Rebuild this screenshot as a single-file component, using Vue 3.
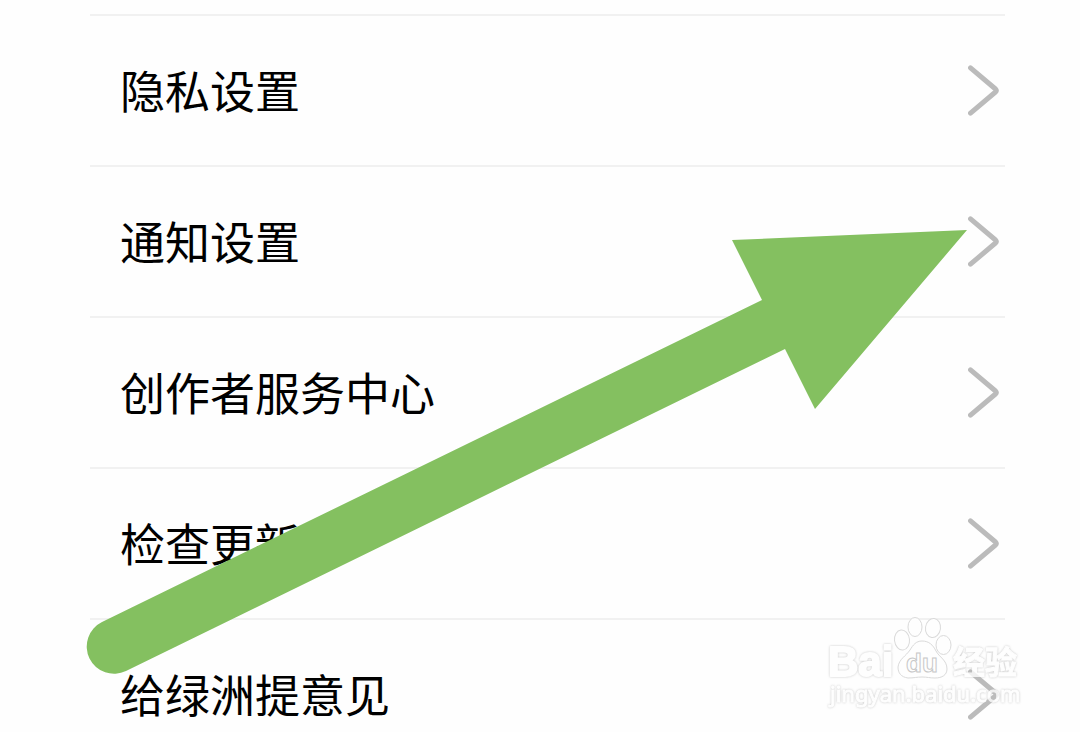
<script setup>
const items = ['隐私设置', '通知设置', '创作者服务中心', '检查更新', '给绿洲提意见']
</script>

<template>
  <main class="page">
    <ul class="list">
      <li v-for="item in items" :key="item" class="item">
        <button type="button" class="row">
          <span class="label">{{ item }}</span>
          <svg class="chevron" viewBox="0 0 32 52" aria-hidden="true">
            <path d="M2.5 2.800 L27.500 24 Q29 25.500 27.500 27 L2.500 48.200" />
          </svg>
        </button>
      </li>
    </ul>

    <svg class="arrow" viewBox="0 0 1080 732" aria-hidden="true">
      <path d="M102 622 L762 300 L732 240 L967 230 L815 409 L785 349 L126 671 A27 27 0 0 1 102 622 Z" />
    </svg>

    <svg class="watermark" viewBox="0 0 204 100" role="img" aria-label="Baidu 经验 jingyan.baidu.com">
      <g class="paw">
        <ellipse cx="77" cy="30" rx="7.500" ry="10" transform="rotate(-6 77 30)" />
        <ellipse cx="90" cy="17" rx="7" ry="9.500" />
        <ellipse cx="108" cy="18" rx="7.500" ry="9.500" transform="rotate(8 108 18)" />
        <ellipse cx="118.500" cy="35" rx="7.500" ry="9.500" />
        <path d="M97 31 C104 31 108 35 111 41 C114 47 122 50 122 59 C122 65 117 68 110 68 C105 68 102 67 97 67 C92 67 89 68 83 68 C76 67 73 63 73 57 C74 49 81 46 85 40 C88 35 91 31 97 31 Z" />
      </g>
      <text class="word brand" x="3" y="66">Bai</text>
      <text class="du" x="81" y="62">du</text>
      <text class="word cjk" x="128" y="64">经验</text>
      <text class="word url" x="5" y="92">jingyan.baidu.com</text>
    </svg>
  </main>
</template>

<style>
body {
  margin: 0;
  background: #fefefe;
}
</style>

<style scoped>
.page {
  position: relative;
  box-sizing: border-box;
  height: 100vh;
  padding: 14px 75px 0 90px;
  overflow: hidden;
  background: #fefefe;
  font-family: "Noto Sans CJK SC", sans-serif;
}

.list {
  margin: 0;
  padding: 0;
  list-style: none;
}

.item {
  border-top: 2px solid #f1f1f1;
}

.row {
  display: flex;
  align-items: center;
  justify-content: space-between;
  width: 100%;
  height: 149px;
  padding: 0 5px 0 30px;
  border: 0;
  background: none;
  color: #000;
  font: inherit;
  font-size: 45px;
  line-height: 66px;
  text-align: left;
  cursor: pointer;
}

.label {
  padding-bottom: 2px;
}

.chevron {
  flex: none;
  width: 32px;
  height: 52px;
  fill: none;
  stroke: #bbb;
  stroke-width: 5;
  stroke-linecap: round;
  stroke-linejoin: round;
}

.arrow {
  position: absolute;
  top: 0;
  left: 0;
  width: 100%;
  fill: #84c060;
  pointer-events: none;
}

.watermark {
  position: absolute;
  right: 51px;
  bottom: 22px;
  width: 204px;
  height: 100px;
  pointer-events: none;
}

.paw {
  fill: #fefefe;
  stroke: #dadada;
  stroke-width: 1;
}

.word {
  fill: #fefefe;
  stroke: #fefefe;
  stroke-width: 2;
  stroke-linejoin: round;
  filter: drop-shadow(0 0 1px #bbb);
  opacity: 0.8;
}

.brand {
  font: bold 42px "Liberation Sans", sans-serif;
}

.du {
  fill: #fefefe;
  stroke: #c8c8c8;
  stroke-width: 1;
  font: bold 26px "Liberation Sans", sans-serif;
}

.cjk {
  stroke-width: 1;
  font: bold 32px "Noto Sans CJK SC", sans-serif;
}

.url {
  stroke-width: 1;
  font: 22px "Noto Sans", sans-serif;
}
</style>
